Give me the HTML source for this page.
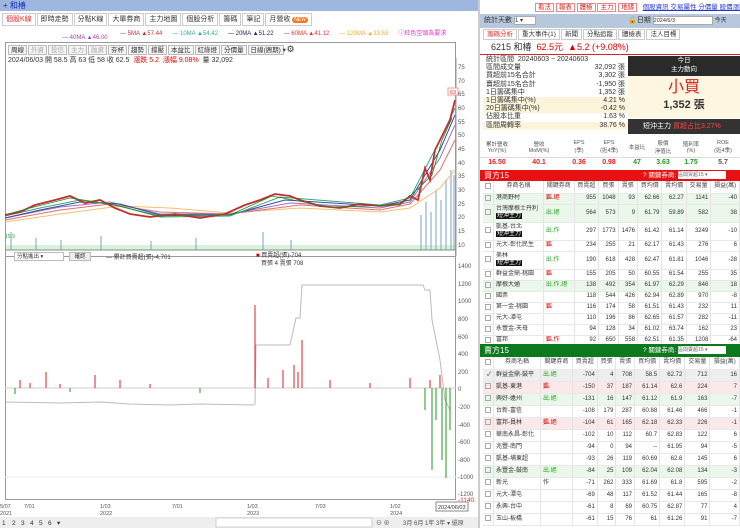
<!DOCTYPE html>
<html><head><meta charset="utf-8"><style>
*{box-sizing:border-box;margin:0;padding:0}
body{width:740px;height:528px;overflow:hidden;background:#fff;font-family:"Liberation Sans","Noto Sans CJK TC",sans-serif;font-size:7px;color:#333;position:relative}
.a{position:absolute}
.btn{display:inline-block;border:1px solid #bbb;background:#f4f4f4;padding:0 2px;height:10px;line-height:9px;margin-right:1px;font-size:6.5px}
.tab{display:inline-block;border:1px solid #ccc;background:#fff;padding:0 3px;height:13px;line-height:12px;margin-right:1px;font-size:7px}
table{border-collapse:collapse;width:100%;font-size:6px;line-height:7px}
td,th{border-right:1px solid #e4e4e4;border-bottom:1px solid #e8e8e8;text-align:right;padding:0 2px;white-space:nowrap;font-weight:normal;overflow:hidden}
th{text-align:center;height:12px;background:#fff;color:#444}
td.n{text-align:left}
tr.s td{height:11px}
tr.d td{height:18px}
tr.t td{height:12px}
.g{background:#eaf7ea}.p{background:#fbe9ea}
.bk{background:#111;color:#fff;padding:0 1px}
.cb{display:inline-block;width:6px;height:6px;border:1px solid #aaa;vertical-align:middle}
.rg{color:#d00}.gg{color:#2a2}
.st div{display:flex;justify-content:space-between;height:8.2px;line-height:8.2px;padding:0 3px;font-size:7px}
</style></head><body>

<div class="a" style="left:0;top:0;width:478px;height:11px;background:#9fb6de;color:#1030c0;font-size:8px;line-height:11px;padding-left:3px">+ 和椿</div>
<div class="a" style="left:2px;top:13px;width:470px;height:14px">
<span class="tab" style="color:#d33">個股K線</span><span class="tab">即時走勢</span><span class="tab">分點K線</span><span class="tab">大單券商</span><span class="tab">主力地圖</span><span class="tab">個股分析</span><span class="tab">籌碼</span><span class="tab">筆記</span><span class="tab">月營收 <span style="background:#f07820;color:#fff;border-radius:4px;padding:0 2px;font-size:5px">NEW</span></span></div>
<div class="a" style="left:120px;top:28px;font-size:6px;white-space:nowrap"><span style="color:#b33">— 5MA ▲57.44</span>&nbsp;&nbsp;&nbsp;&nbsp;&nbsp;&nbsp;<span style="color:#3a9">— 10MA ▲54.42</span>&nbsp;&nbsp;&nbsp;&nbsp;&nbsp;&nbsp;<span style="color:#226">— 20MA ▲51.22</span>&nbsp;&nbsp;&nbsp;&nbsp;&nbsp;&nbsp;<span style="color:#d33">— 60MA ▲41.12</span>&nbsp;&nbsp;&nbsp;&nbsp;&nbsp;&nbsp;<span style="color:#e8b030">— 120MA ▲33.53</span>&nbsp;&nbsp;&nbsp;&nbsp;&nbsp;&nbsp;<span style="color:#d3c">ⓘ紅色空頭為要求</span></div>
<div class="a" style="left:62px;top:35px;font-size:6px;color:#a4a">— 40MA ▲46.00</div>
<div class="a" style="left:5px;top:42px;width:451px;height:214px;border:1px solid #999;border-bottom:none"></div>
<div class="a" style="left:8px;top:44px;white-space:nowrap"><span class="btn">周線</span><span class="btn" style="color:#aaa">外資</span><span class="btn" style="color:#aaa">投信</span><span class="btn" style="color:#aaa">主力</span><span class="btn" style="color:#aaa">融資</span><span class="btn">夯杯</span><span class="btn">趨勢</span><span class="btn">撐壓</span><span class="btn">本益比</span><span class="btn">紅綠燈</span><span class="btn">分價量</span><span class="btn" style="width:36px">日線(週期) ▾</span> <span style="font-size:9px">⚙</span></div>
<div class="a" style="left:8px;top:55px;font-size:7px;white-space:nowrap">2024/06/03 開 58.5 高 63 低 58 收 62.5 &nbsp;<span class="rg">漲跌 5.2 &nbsp;漲幅 9.08%</span> &nbsp;量 32,092</div>

<svg class="a" style="left:0;top:58px" width="478" height="200" viewBox="0 58 478 200">
<g fill="#bcd0e4">
<rect x="10" y="232" width="2" height="18"/><rect x="35" y="238" width="2" height="12"/><rect x="60" y="240" width="2" height="10"/><rect x="100" y="236" width="2" height="14"/><rect x="150" y="241" width="2" height="9"/><rect x="195" y="238" width="2" height="12"/><rect x="262" y="232" width="2" height="18"/><rect x="290" y="240" width="2" height="10"/><rect x="420" y="215" width="2" height="35"/><rect x="425" y="202" width="2" height="48"/><rect x="430" y="212" width="2" height="38"/><rect x="435" y="190" width="2" height="60"/><rect x="440" y="200" width="2" height="50"/><rect x="445" y="180" width="2" height="70"/><rect x="450" y="170" width="2" height="80"/><rect x="453" y="175" width="2" height="75"/>
</g>
<polyline fill="none" stroke="#f0c070" stroke-width="1" points="5,222 60,214 120,206 170,208 230,213 300,208 380,212 410,208 440,188 455,170"/>
<polyline fill="none" stroke="#e07070" stroke-width="1" points="5,220 60,210 110,204 160,212 230,214 300,205 380,210 410,204 440,170 455,140"/>
<polyline fill="none" stroke="#a070c0" stroke-width="1" points="5,218 60,207 110,202 160,214 230,214 290,203 380,208 410,202 440,158 455,125"/>
<polyline fill="none" stroke="#3050a0" stroke-width="1" points="5,218 40,210 80,202 120,204 160,215 230,215 285,200 380,206 410,200 440,150 455,115"/>
<polyline fill="none" stroke="#40a080" stroke-width="1" points="5,216 40,208 80,200 120,206 160,217 230,216 280,197 380,205 410,198 440,140 455,108"/>
<polyline fill="none" stroke="#c03030" stroke-width="1.8" points="5,215 20,212 35,205 55,200 70,196 85,203 100,200 115,208 130,214 150,217 175,214 200,218 225,214 245,205 260,200 275,194 290,196 300,200 320,206 340,208 360,204 380,206 400,204 410,196 418,200 425,168 430,180 435,150 440,140 445,130 450,120 455,100"/>
<polyline fill="none" stroke="#228822" stroke-width="0.8" points="8,214 30,208 70,198 110,204 160,216 230,215 272,196 330,207 400,205 422,185 432,175 442,140 452,118"/>
<g fill="#6c6"><rect x="5" y="245" width="450" height="5" opacity="0.25"/></g>
<line x1="5" y1="250" x2="456" y2="250" stroke="#888"/>
<line x1="456" y1="58" x2="456" y2="256" stroke="#999"/>
<g fill="#555" font-size="6">
<text x="458" y="69">75</text><text x="458" y="83">70</text><text x="458" y="96">65</text><text x="458" y="110">60</text><text x="458" y="124">55</text><text x="458" y="137">50</text><text x="458" y="151">45</text><text x="458" y="165">40</text><text x="458" y="178">35</text><text x="458" y="192">30</text><text x="458" y="206">25</text><text x="458" y="219">20</text><text x="458" y="233">15</text><text x="458" y="247">10</text></g>
<rect x="448" y="88" width="10" height="7" fill="#fff" stroke="#e99"/><text x="450" y="94" font-size="5.5" fill="#d33">63</text>
<text x="5" y="238" font-size="5" fill="#3a3">15.9</text>
</svg>

<div class="a" style="left:5px;top:256px;width:451px;height:244px;border:1px solid #999"></div>
<div class="a" style="left:14px;top:252px;width:50px;height:9px;border:1px solid #bbb;background:#fff;font-size:5.5px;padding-left:2px;line-height:8px">分點進出 ▾</div>
<div class="a" style="left:69px;top:252px;width:22px;height:9px;border:1px solid #bbb;background:#eee;font-size:5.5px;text-align:center;line-height:8px">確認</div>
<div class="a" style="left:106px;top:252px;font-size:6px">— 累計買賣超(張)-4,701</div>
<div class="a" style="left:256px;top:252px;font-size:6px;line-height:8px"><span style="color:#c00">■</span> 買賣超(張)-704<br>&nbsp;&nbsp;&nbsp;買張 4 賣張 708</div>
<svg class="a" style="left:0;top:258px" width="478" height="270" viewBox="0 258 478 270">
<line x1="5" y1="388" x2="456" y2="388" stroke="#ccc"/>
<line x1="5" y1="477" x2="456" y2="477" stroke="#eee"/>
<polyline fill="none" stroke="#bbb" stroke-width="1" points="6,402 60,403 100,402 130,404 170,405 200,404 253,405 255,404 256,345 290,345 296,318 300,318 302,285 423,285 425,290 430,290 432,320 440,360 445,400 450,410"/>
<g stroke="#d22" stroke-width="1">
<line x1="20" y1="388" x2="20" y2="380"/><line x1="30" y1="388" x2="30" y2="383"/><line x1="46" y1="388" x2="46" y2="372"/><line x1="60" y1="388" x2="60" y2="384"/><line x1="95" y1="388" x2="95" y2="375"/><line x1="120" y1="388" x2="120" y2="380"/><line x1="150" y1="388" x2="150" y2="384"/><line x1="255" y1="388" x2="255" y2="305"/><line x1="268" y1="388" x2="268" y2="378"/><line x1="283" y1="388" x2="283" y2="370"/><line x1="294" y1="388" x2="294" y2="365"/><line x1="298" y1="388" x2="298" y2="372"/><line x1="302" y1="388" x2="302" y2="340"/><line x1="330" y1="388" x2="330" y2="380"/><line x1="370" y1="388" x2="370" y2="383"/><line x1="410" y1="388" x2="410" y2="378"/><line x1="430" y1="388" x2="430" y2="380"/><line x1="440" y1="388" x2="440" y2="375"/></g>
<g stroke="#292" stroke-width="1">
<line x1="15" y1="388" x2="15" y2="394"/><line x1="70" y1="388" x2="70" y2="392"/><line x1="200" y1="388" x2="200" y2="393"/><line x1="425" y1="388" x2="425" y2="410"/><line x1="432" y1="388" x2="432" y2="470"/><line x1="436" y1="388" x2="436" y2="420"/><line x1="442" y1="388" x2="442" y2="460"/><line x1="446" y1="388" x2="446" y2="478"/><line x1="450" y1="388" x2="450" y2="430"/></g>
<g fill="#555" font-size="6"><text x="458" y="268">1400</text><text x="458" y="286">1200</text><text x="458" y="303">1000</text><text x="458" y="321">800</text><text x="458" y="339">600</text><text x="458" y="356">400</text><text x="458" y="374">200</text><text x="458" y="391">0</text><text x="458" y="409">-200</text><text x="458" y="427">-400</text><text x="458" y="444">-600</text><text x="458" y="462">-800</text><text x="458" y="479">-1000</text><text x="458" y="496">-1200</text></g>
<text x="458" y="502" font-size="6.5" fill="#d22">-1140.</text>
<g fill="#555" font-size="5.5"><text x="0" y="508">5/07</text><text x="0" y="515">2021</text><text x="24" y="508">7/01</text><text x="100" y="508">1/03</text><text x="100" y="515">2022</text><text x="172" y="508">7/01</text><text x="247" y="508">1/03</text><text x="247" y="515">2023</text><text x="315" y="508">7/03</text><text x="390" y="508">1/02</text><text x="390" y="515">2024</text></g>
<rect x="436" y="502" width="32" height="9" fill="#fff" stroke="#888"/><text x="438" y="509" font-size="5.5" fill="#333">2024/06/03</text>
<rect x="0" y="517" width="478" height="11" fill="#eee"/>
<g font-size="6.5" fill="#333"><text x="2" y="525">1</text><text x="12" y="525">2</text><text x="21" y="525">3</text><text x="30" y="525">4</text><text x="39" y="525">5</text><text x="48" y="525">6</text><text x="57" y="525">▾</text></g>
<rect x="216" y="518" width="156" height="9" fill="#fff" stroke="#ccc"/>
<g font-size="6" fill="#555"><text x="376" y="525">⊖ ⊕</text><text x="403" y="525">3月 6月 1年 3年 ▾ 還原</text></g>
</svg>

<div class="a" style="left:478px;top:0;width:2px;height:528px;background:#ccc"></div>
<div class="a" style="left:535px;top:1px;white-space:nowrap;font-size:6.5px">
<span style="border:1px solid #e88;color:#c22;padding:0 2px;background:#fff">看法</span> <span style="border:1px solid #e88;color:#c22;padding:0 2px">報表</span> <span style="border:1px solid #e88;color:#c22;padding:0 2px">體檢</span> <span style="border:1px solid #e88;color:#c22;padding:0 2px">主力</span> <span style="border:1px solid #e88;color:#c22;padding:0 2px">地緣</span> &nbsp;&nbsp;<span style="color:#23c;text-decoration:underline">個股資訊 交易屬性 分價量 股價漲跌</span></div>
<div class="a" style="left:480px;top:14px;width:260px;height:14px;background:#b8c8dc;font-size:7px;line-height:14px;padding-left:4px">統計天數 <span style="display:inline-block;width:22px;height:9px;background:#fff;border:1px solid #aaa;vertical-align:middle;font-size:6px;line-height:8px">1 ▾</span><span style="position:absolute;left:148px">🔒日期 <span style="display:inline-block;width:60px;height:9px;background:#fff;border:1px solid #aaa;vertical-align:middle;font-size:5.5px;line-height:8px">2024/6/3</span> <span style="font-size:6px">今天</span></span></div>
<div class="a" style="left:483px;top:29px;white-space:nowrap"><span class="tab" style="color:#d33;height:11px;line-height:10px;font-size:6.5px">籌碼分析</span><span class="tab" style="height:11px;line-height:10px;font-size:6.5px">重大事件(1)</span><span class="tab" style="height:11px;line-height:10px;font-size:6.5px">新聞</span><span class="tab" style="height:11px;line-height:10px;font-size:6.5px">分點追蹤</span><span class="tab" style="height:11px;line-height:10px;font-size:6.5px">體檢表</span><span class="tab" style="height:11px;line-height:10px;font-size:6.5px">法人目標</span></div>
<div class="a" style="left:480px;top:41px;width:260px;height:14px;border-bottom:1.5px solid #d22;font-size:9px;line-height:13px;padding-left:11px;white-space:nowrap">6215 和椿 &nbsp;<span class="rg">62.5元 &nbsp;▲5.2 (+9.08%)</span></div>
<div class="a st" style="left:483px;top:56px;width:145px">
<div><span>統計區間 &nbsp;20240603 ~ 20240603</span></div>
<div><span>區間成交量</span><span>32,092 張</span></div>
<div><span>買超前15名合計</span><span>3,302 張</span></div>
<div><span>賣超前15名合計</span><span>-1,950 張</span></div>
<div><span>1日籌碼集中</span><span>1,352 張</span></div>
<div style="background:#fbf3da"><span>1日籌碼集中(%)</span><span>4.21 %</span></div>
<div style="background:#fbf3da"><span>20日籌碼集中(%)</span><span>-0.42 %</span></div>
<div><span>佔股本比重</span><span>1.63 %</span></div>
<div style="background:#fbf3da"><span>區間周轉率</span><span>38.76 %</span></div>
</div>
<div class="a" style="left:628px;top:56px;width:112px;height:20px;background:#2a2a2a;color:#fff;text-align:center;font-size:6.5px;line-height:9px">今日<br>主力動向</div>
<div class="a" style="left:628px;top:76px;width:112px;height:42px;background:#fdf6e0;text-align:center"><div style="color:#d22;font-size:16px;line-height:20px;margin-top:2px">小買</div><div style="font-size:11px;line-height:14px;font-weight:bold">1,352 張</div></div>
<div class="a" style="left:628px;top:119px;width:112px;height:15px;background:#333;color:#fff;font-size:7px;line-height:15px;padding-left:15px;white-space:nowrap">短沖主力 <span style="color:#f44">買超占比3.27%</span></div>
<div class="a" style="left:480px;top:136px;width:260px;height:33px;font-size:5.5px;color:#555">
<div style="display:flex;text-align:center;height:22px;align-items:center;border-bottom:1px solid #ddd"><div style="width:34px">累計營收<br>YoY(%)</div><div style="width:50px">營收<br>MoM(%)</div><div style="width:30px">EPS<br>(季)</div><div style="width:30px">EPS<br>(近4季)</div><div style="width:26px">本益比</div><div style="width:26px">股價<br>淨值比</div><div style="width:30px">殖利率<br>(%)</div><div style="width:34px">ROE<br>(近4季)</div></div>
<div style="display:flex;text-align:center;height:10px;font-size:7px;font-weight:bold;line-height:10px"><div style="width:34px;color:#d22">16.50</div><div style="width:50px;color:#d22">40.1</div><div style="width:30px;color:#d22">0.36</div><div style="width:30px;color:#d22">0.98</div><div style="width:26px;color:#292">47</div><div style="width:26px;color:#292">3.63</div><div style="width:30px;color:#292">1.75</div><div style="width:34px">5.7</div></div></div>
<div class="a" style="left:480px;top:170px;width:260px;height:11px;background:#e81010;color:#fff;font-size:8px;line-height:11px;padding-left:4px">買方15<span style="position:absolute;left:163px;font-size:6.5px">? 關鍵券商: <span style="display:inline-block;width:48px;height:8px;background:#fff;color:#666;vertical-align:middle;font-size:5px;line-height:8px">區間買超15 ▾</span></span></div>
<div class="a" style="left:483px;top:181px;width:257px;height:162px;overflow:hidden">
<table><tr><th style="width:10px"><span class="cb"></span></th><th>券商名稱</th><th>關鍵券商</th><th>買賣超</th><th>買張</th><th>賣張</th><th>買均價</th><th>賣均價</th><th>交易量</th><th>損益(萬)</th></tr>
<tr class="s g"><td><span class="cb"></span></td><td class="n">港商野村</td><td class="n rg">鑑.絕</td><td>955</td><td>1048</td><td>93</td><td>62.66</td><td>62.27</td><td>1141</td><td>-40</td></tr>
<tr class="d g"><td><span class="cb"></span></td><td class="n">台灣摩根士丹利<br><span class="bk">短沖主力</span></td><td class="n gg">出.絕</td><td>564</td><td>573</td><td>9</td><td>61.79</td><td>59.89</td><td>582</td><td>38</td></tr>
<tr class="d"><td><span class="cb"></span></td><td class="n">凱基-台北<br><span class="bk">短沖主力</span></td><td class="n gg">出.作</td><td>297</td><td>1773</td><td>1476</td><td>61.42</td><td>61.14</td><td>3249</td><td>-10</td></tr>
<tr class="s"><td><span class="cb"></span></td><td class="n">元大-彰化民生</td><td class="n rg">鑑</td><td>234</td><td>255</td><td>21</td><td>62.17</td><td>61.43</td><td>276</td><td>6</td></tr>
<tr class="d"><td><span class="cb"></span></td><td class="n">美林<br><span class="bk">短沖主力</span></td><td class="n gg">出.作</td><td>190</td><td>618</td><td>428</td><td>62.47</td><td>61.81</td><td>1046</td><td>-28</td></tr>
<tr class="s"><td><span class="cb"></span></td><td class="n">群益金鼎-桃園</td><td class="n rg">鑑</td><td>155</td><td>205</td><td>50</td><td>60.55</td><td>61.54</td><td>255</td><td>35</td></tr>
<tr class="s g"><td><span class="cb"></span></td><td class="n">摩根大通</td><td class="n gg">出.作.絕</td><td>138</td><td>492</td><td>354</td><td>61.97</td><td>62.29</td><td>846</td><td>18</td></tr>
<tr class="s"><td><span class="cb"></span></td><td class="n">國票</td><td></td><td>118</td><td>544</td><td>426</td><td>62.94</td><td>62.89</td><td>970</td><td>-8</td></tr>
<tr class="s"><td><span class="cb"></span></td><td class="n">第一金-桃園</td><td class="n rg">鑑</td><td>116</td><td>174</td><td>58</td><td>61.51</td><td>61.43</td><td>232</td><td>11</td></tr>
<tr class="s"><td><span class="cb"></span></td><td class="n">元大-潭屯</td><td></td><td>110</td><td>196</td><td>86</td><td>62.65</td><td>61.57</td><td>282</td><td>-11</td></tr>
<tr class="s"><td><span class="cb"></span></td><td class="n">永豐金-天母</td><td></td><td>94</td><td>128</td><td>34</td><td>61.02</td><td>63.74</td><td>162</td><td>23</td></tr>
<tr class="s"><td><span class="cb"></span></td><td class="n">富邦</td><td class="n rg">鑑.作</td><td>92</td><td>650</td><td>558</td><td>62.51</td><td>61.35</td><td>1208</td><td>-64</td></tr>
</table></div>
<div class="a" style="left:480px;top:344px;width:260px;height:13px;background:#0c7a1c;color:#fff;font-size:8px;line-height:13px;padding-left:4px">賣方15<span style="position:absolute;left:163px;font-size:6.5px">? 關鍵券商: <span style="display:inline-block;width:48px;height:8px;background:#fff;color:#666;vertical-align:middle;font-size:5px;line-height:8px">區間賣超15 ▾</span></span></div>
<div class="a" style="left:483px;top:357px;width:257px;height:171px;overflow:hidden">
<table><tr><th style="width:10px"><span class="cb"></span></th><th>券商名稱</th><th>關鍵券商</th><th>買賣超</th><th>買張</th><th>賣張</th><th>買均價</th><th>賣均價</th><th>交易量</th><th>損益(萬)</th></tr>
<tr class="t" style="background:#eee"><td>✓</td><td class="n">群益金鼎-鼓平</td><td class="n gg">出.絕</td><td>-704</td><td>4</td><td>708</td><td>58.5</td><td>62.72</td><td>712</td><td>16</td></tr>
<tr class="t p"><td><span class="cb"></span></td><td class="n">凱基-東港</td><td class="n rg">鑑</td><td>-150</td><td>37</td><td>187</td><td>61.14</td><td>62.6</td><td>224</td><td>7</td></tr>
<tr class="t g"><td><span class="cb"></span></td><td class="n">興好-遠州</td><td class="n gg">出.絕</td><td>-131</td><td>16</td><td>147</td><td>61.12</td><td>61.9</td><td>163</td><td>-7</td></tr>
<tr class="t"><td><span class="cb"></span></td><td class="n">台新-富信</td><td></td><td>-108</td><td>179</td><td>287</td><td>60.88</td><td>61.46</td><td>466</td><td>-1</td></tr>
<tr class="t p"><td><span class="cb"></span></td><td class="n">富邦-員林</td><td class="n rg">鑑.絕</td><td>-104</td><td>61</td><td>165</td><td>62.18</td><td>62.33</td><td>226</td><td>-1</td></tr>
<tr class="t"><td><span class="cb"></span></td><td class="n">華南永昌-彰化</td><td></td><td>-102</td><td>10</td><td>112</td><td>60.7</td><td>62.83</td><td>122</td><td>6</td></tr>
<tr class="t"><td><span class="cb"></span></td><td class="n">兆豐-南門</td><td></td><td>-94</td><td>0</td><td>94</td><td>--</td><td>61.95</td><td>94</td><td>-5</td></tr>
<tr class="t"><td><span class="cb"></span></td><td class="n">凱基-埔東超</td><td></td><td>-93</td><td>26</td><td>119</td><td>60.69</td><td>62.6</td><td>145</td><td>6</td></tr>
<tr class="t g"><td><span class="cb"></span></td><td class="n">永豐金-鼓南</td><td class="n gg">出.絕</td><td>-84</td><td>25</td><td>109</td><td>62.04</td><td>62.08</td><td>134</td><td>-3</td></tr>
<tr class="t"><td><span class="cb"></span></td><td class="n">新光</td><td class="n">作</td><td>-71</td><td>262</td><td>333</td><td>61.69</td><td>61.8</td><td>595</td><td>-2</td></tr>
<tr class="t"><td><span class="cb"></span></td><td class="n">元大-潭屯</td><td></td><td>-69</td><td>48</td><td>117</td><td>61.52</td><td>61.44</td><td>165</td><td>-8</td></tr>
<tr class="t"><td><span class="cb"></span></td><td class="n">永興-台中</td><td></td><td>-61</td><td>8</td><td>69</td><td>60.75</td><td>62.87</td><td>77</td><td>4</td></tr>
<tr class="t"><td><span class="cb"></span></td><td class="n">玉山-板橋</td><td></td><td>-61</td><td>15</td><td>76</td><td>61</td><td>61.26</td><td>91</td><td>-7</td></tr>
</table></div>
</body></html>
